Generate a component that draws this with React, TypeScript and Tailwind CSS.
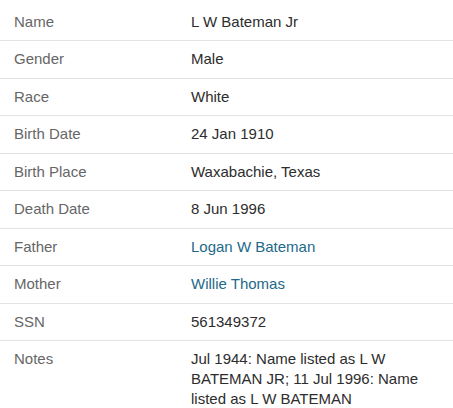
const rows: { label: string; value: string; link?: boolean }[] = [
  { label: "Name", value: "L W Bateman Jr" },
  { label: "Gender", value: "Male" },
  { label: "Race", value: "White" },
  { label: "Birth Date", value: "24 Jan 1910" },
  { label: "Birth Place", value: "Waxabachie, Texas" },
  { label: "Death Date", value: "8 Jun 1996" },
  { label: "Father", value: "Logan W Bateman", link: true },
  { label: "Mother", value: "Willie Thomas", link: true },
  { label: "SSN", value: "561349372" },
  {
    label: "Notes",
    value: "Jul 1944: Name listed as L W BATEMAN JR; 11 Jul 1996: Name listed as L W BATEMAN",
  },
];

export default function App() {
  return (
    <div className="w-[453px] h-[408px] bg-white pt-[3.5px] overflow-hidden font-['Liberation_Sans',Arial,sans-serif] text-[15px]">
      {rows.map((row, i) => (
        <div
          key={row.label}
          className={`flex py-[8.25px] leading-5 ${i < rows.length - 1 ? "border-b border-[#e3e3e3]" : ""}`}
        >
          <div className="w-[191px] shrink-0 pl-[14px] text-[#666666]">{row.label}</div>
          <div className="w-[245px]">
            {row.link ? (
              <a href="#" className="text-[#23698a]">
                {row.value}
              </a>
            ) : (
              <span className="text-[#2d2d2d]">{row.value}</span>
            )}
          </div>
        </div>
      ))}
    </div>
  );
}
